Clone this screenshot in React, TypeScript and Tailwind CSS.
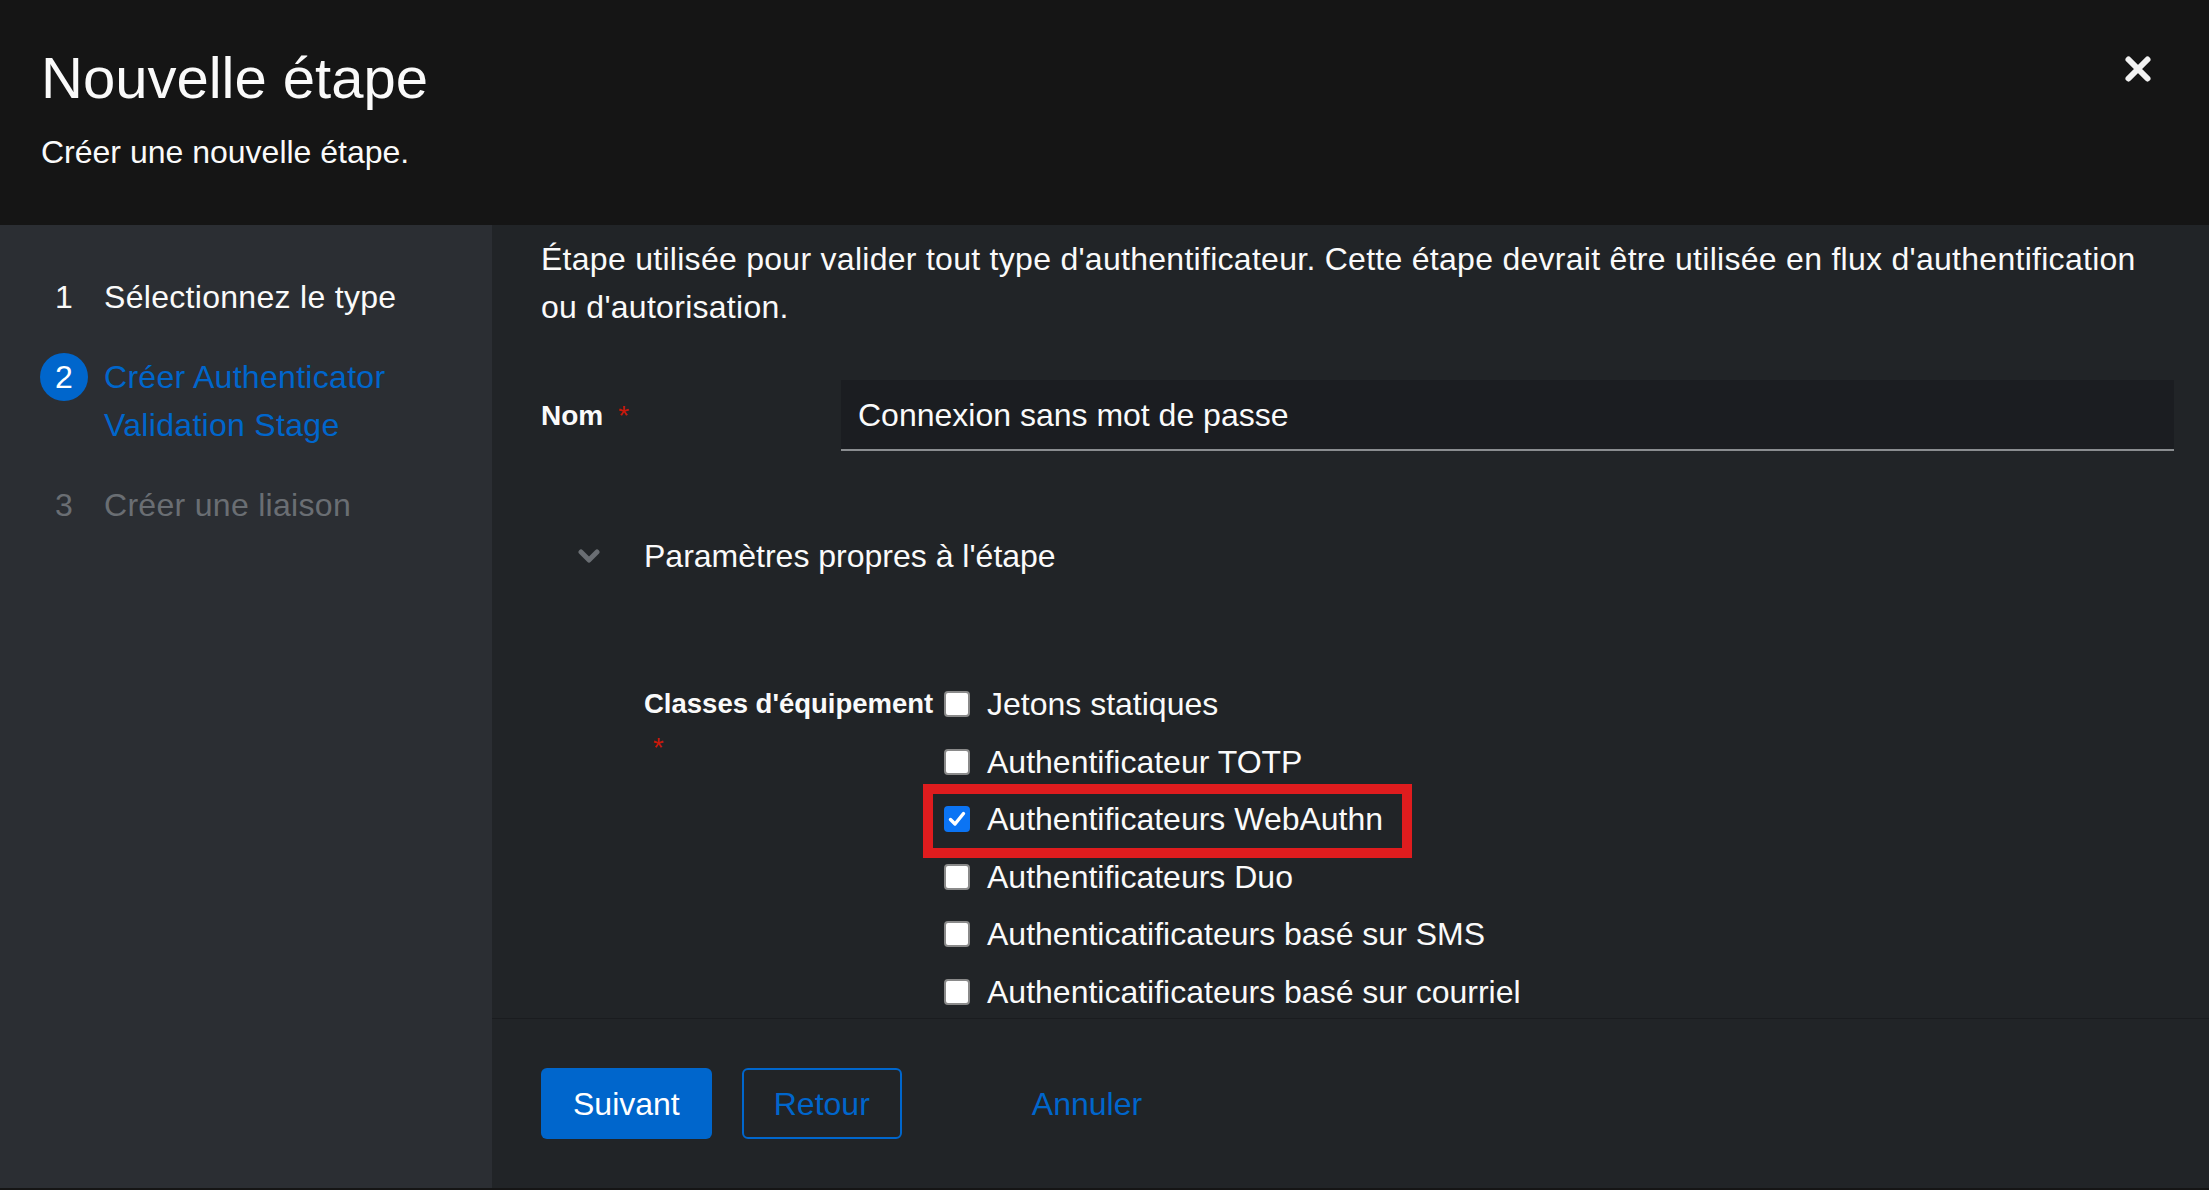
import React from "react";

const steps = [
  { n: "1", label: "Sélectionnez le type", state: "done" },
  { n: "2", label: "Créer Authenticator Validation Stage", state: "current" },
  { n: "3", label: "Créer une liaison", state: "todo" },
];

const devices = [
  { label: "Jetons statiques", checked: false },
  { label: "Authentificateur TOTP", checked: false },
  { label: "Authentificateurs WebAuthn", checked: true, highlight: true },
  { label: "Authentificateurs Duo", checked: false },
  { label: "Authenticatificateurs basé sur SMS", checked: false },
  { label: "Authenticatificateurs basé sur courriel", checked: false },
];

const Checkbox = ({ checked }: { checked: boolean }) =>
  checked ? (
    <span className="flex h-[26px] w-[26px] shrink-0 items-center justify-center rounded-[4px] bg-[#0b74f4]">
      <svg width="18" height="16" viewBox="0 0 18 16">
        <path d="M2.5 8.5 L7 13 L15.5 2.5" fill="none" stroke="#ffffff" strokeWidth="3.4" strokeLinecap="round" strokeLinejoin="round" />
      </svg>
    </span>
  ) : (
    <span className="h-[26px] w-[26px] shrink-0 rounded-[4px] border-2 border-[#8a8a8a] bg-white" />
  );

const StepItem = ({ n, label, state }: { n: string; label: string; state: string }) => {
  const color =
    state === "current" ? "text-[#0066cc]" : state === "done" ? "text-[#fafafa]" : "text-[#6a6e73]";
  return (
    <div className="flex items-start">
      {state === "current" ? (
        <span className="flex h-[48px] w-[48px] shrink-0 items-center justify-center rounded-full bg-[#0066cc] text-[32px] text-white">
          {n}
        </span>
      ) : (
        <span className={`w-[48px] shrink-0 text-center text-[32px] leading-[48px] ${color}`}>{n}</span>
      )}
      <span className={`ml-[16px] max-w-[340px] text-[32px] leading-[48px] tracking-[0.3px] ${color}`}>{label}</span>
    </div>
  );
};

export default function App() {
  return (
    <div className="flex h-[1190px] w-[2209px] flex-col overflow-hidden bg-[#151515] font-['Liberation_Sans',Arial,sans-serif] text-[#fafafa]">
      {/* header */}
      <header className="relative h-[225px] shrink-0 bg-[#151515] px-[41px] pt-[44px]">
        <h1 className="text-[58px] leading-[67px]">Nouvelle étape</h1>
        <p className="mt-[17px] text-[32px] leading-[48px]">Créer une nouvelle étape.</p>
        <button className="absolute right-[57px] top-[55px] h-[28px] w-[28px]">
          <svg width="28" height="28" viewBox="0 0 28 28">
            <path d="M4.5 4.5 L23.5 23.5 M23.5 4.5 L4.5 23.5" stroke="#f2f2f2" strokeWidth="6" strokeLinecap="round" />
          </svg>
        </button>
      </header>

      <div className="flex h-[963px] shrink-0">
        {/* steps */}
        <nav className="flex w-[492px] shrink-0 flex-col gap-[32px] bg-[#2b2e33] pl-[40px] pt-[48px]">
          {steps.map((s) => (
            <StepItem key={s.n} {...s} />
          ))}
        </nav>

        {/* form */}
        <main className="flex flex-1 flex-col bg-[#212427]">
          <div className="flex-1 pl-[49px] pr-[35px] pt-[10px]">
            <p className="text-[32px] leading-[48px] tracking-[0.28px]">
              Étape utilisée pour valider tout type d'authentificateur. Cette étape devrait être utilisée en flux d'authentification
              <br />
              ou d'autorisation.
            </p>

            <div className="mt-[49px] flex items-center">
              <label className="w-[300px] shrink-0 text-[28px] font-bold">
                Nom<span className="ml-[15px] align-top font-normal text-[#c9190b]">*</span>
              </label>
              <div className="flex h-[71px] flex-1 items-center border-b-2 border-[#8a8d90] bg-[#1b1d21] pl-[17px] text-[32px]">
                Connexion sans mot de passe
              </div>
            </div>

            <div className="mt-[81px] flex items-center pl-[37px]">
              <svg width="22" height="14" viewBox="0 0 22 14">
                <path d="M3 3 L11 11 L19 3" fill="none" stroke="#6a6e73" strokeWidth="5" strokeLinecap="round" strokeLinejoin="round" />
              </svg>
              <span className="ml-[44px] text-[32px] leading-[48px]">Paramètres propres à l'étape</span>
            </div>

            <div className="mt-[100px] flex pl-[103px]">
              <div className="w-[300px] shrink-0 pt-[2px] text-[27.5px] font-bold leading-[44px]">
                Classes d'équipement
                <span className="ml-[9px] block font-normal text-[#c9190b]">*</span>
              </div>
              <div className="flex flex-col gap-[9.6px]">
                {devices.map((d) => (
                  <div key={d.label} className="relative flex h-[48px] items-center">
                    {d.highlight && (
                      <span className="absolute -left-[21px] -top-[11px] h-[74px] w-[489px] border-[10px] border-[#df1c1e]" />
                    )}
                    <Checkbox checked={d.checked} />
                    <span className="ml-[17px] text-[32px] leading-[48px]">{d.label}</span>
                  </div>
                ))}
              </div>
            </div>
          </div>

          <footer className="flex h-[170px] shrink-0 items-start border-t border-[#1a1c1f] pl-[49px] pt-[49px]">
            <button className="h-[71px] rounded-[6px] bg-[#0066cc] px-[32px] text-[32px] text-white">Suivant</button>
            <button className="ml-[30px] h-[71px] rounded-[6px] border-2 border-[#0066cc] px-[30px] text-[32px] text-[#0066cc]">
              Retour
            </button>
            <button className="ml-[98px] h-[71px] px-[32px] text-[32px] text-[#0066cc]">Annuler</button>
          </footer>
        </main>
      </div>
    </div>
  );
}
